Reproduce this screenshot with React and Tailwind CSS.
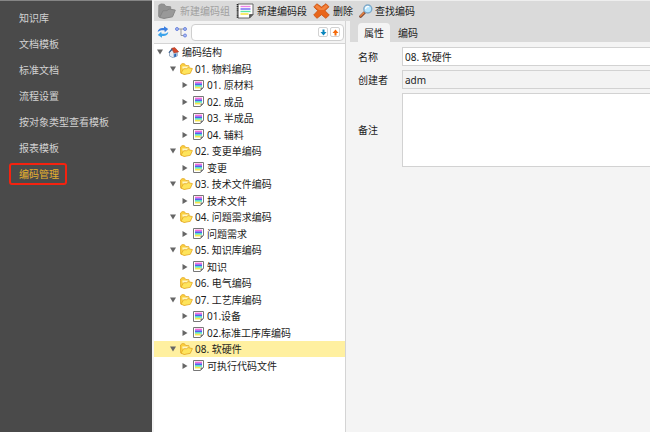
import React, { useState } from 'react';
import clsx from 'clsx';

const MENU = ['知识库', '文档模板', '标准文档', '流程设置', '按对象类型查看模板', '报表模板', '编码管理'];

const TREE = [
  { label: '编码结构', level: 0, icon: 'home', open: true },
  { label: '01. 物料编码', level: 1, icon: 'folder', open: true },
  { label: '01. 原材料', level: 2, icon: 'page' },
  { label: '02. 成品', level: 2, icon: 'page' },
  { label: '03. 半成品', level: 2, icon: 'page' },
  { label: '04. 辅料', level: 2, icon: 'page' },
  { label: '02. 变更单编码', level: 1, icon: 'folder', open: true },
  { label: '变更', level: 2, icon: 'page' },
  { label: '03. 技术文件编码', level: 1, icon: 'folder', open: true },
  { label: '技术文件', level: 2, icon: 'page' },
  { label: '04. 问题需求编码', level: 1, icon: 'folder', open: true },
  { label: '问题需求', level: 2, icon: 'page' },
  { label: '05. 知识库编码', level: 1, icon: 'folder', open: true },
  { label: '知识', level: 2, icon: 'page' },
  { label: '06. 电气编码', level: 1, icon: 'folder', leaf: true },
  { label: '07. 工艺库编码', level: 1, icon: 'folder', open: true },
  { label: '01.设备', level: 2, icon: 'page' },
  { label: '02.标准工序库编码', level: 2, icon: 'page' },
  { label: '08. 软硬件', level: 1, icon: 'folder', open: true },
  { label: '可执行代码文件', level: 2, icon: 'page' },
];

const INDENT = ['pl-[3px]', 'pl-4', 'pl-7'];

function PageIcon() {
  return (
    <svg className="w-[18px] h-4" viewBox="0 0 18 16" fill="none" aria-hidden="true">
      <path d="M2 1h15v10.500L13.500 15H2z" fill="#fff" stroke="#666" />
      <path d="M1.500 1v14" stroke="#222" strokeWidth="1.600" strokeDasharray="1.200 .9" />
      <path d="M17 11.500h-3.500V15z" fill="#555" stroke="#555" strokeWidth=".8" />
      <path d="M4.500 3.500h10" stroke="#ee82e6" strokeWidth="1.400" />
      <path d="M4.500 6h10" stroke="#6b63f2" strokeWidth="1.400" />
      <path d="M4.500 8.500h10" stroke="#5ce6a5" strokeWidth="1.400" />
      <path d="M4.500 11h8" stroke="#f5e02f" strokeWidth="1.400" />
    </svg>
  );
}

function CodeIcon() {
  return (
    <svg className="w-[11px] h-[11px]" viewBox="0 0 11 11" fill="none" aria-hidden="true">
      <path d="M.5.5h10v7l-3 3h-7z" fill="#fff" stroke="#777" />
      <path d="M10.500 7.500h-3v3z" fill="#777" />
      <path d="M2 2.500h7" stroke="#f56ad8" strokeWidth="1.700" />
      <path d="M2 4.200h7" stroke="#5a5af0" strokeWidth="1.700" />
      <path d="M2 5.900h7" stroke="#4fe0c8" strokeWidth="1.700" />
      <path d="M2 7.600h5.500" stroke="#f6e64a" strokeWidth="1.700" />
    </svg>
  );
}

function FolderIcon() {
  return (
    <svg className="w-[13px] h-3" viewBox="0 0 13 12" fill="none" aria-hidden="true">
      <path d="M.6 9.800L.5 2 2.200.6l2.300.2 1.100 1.600 3.400.4V6L5 11.200z" fill="#fbd03f" stroke="#e3a722" strokeWidth=".8" strokeLinejoin="round" />
      <path d="M2.200 3.400l6.400.2v2.600l-5 3z" fill="#fff6c4" />
      <path d="M1 10.200l2.600-4.400 3-.1 1.500-1.100 4.300 1-2.100 4.700-6 1.200z" fill="#fee45c" stroke="#e3a722" strokeWidth=".8" strokeLinejoin="round" />
    </svg>
  );
}

function HomeIcon() {
  return (
    <svg className="w-[11px] h-[11px]" viewBox="0 0 11 11" fill="none" aria-hidden="true">
      <path d="M1.500 5.500l3-3.500 5 2.500v4.300L5 10.700 1.500 9z" fill="#e8eef6" stroke="#7890ad" strokeWidth=".7" />
      <path d="M5 6l4.500-1.500v4.300L5 10.700z" fill="#b9cce4" />
      <path d="M6.200 7.200l2-.8v3l-2 .8z" fill="#2867b5" />
      <path d="M3.600 1.300L6.800.6l3.900 4.200L6 6z" fill="#d5482b" stroke="#a5351d" strokeWidth=".5" />
      <path d="M3.800 1.200L.4 5.400l1 .7L4.200 3l1.600 3z" fill="#3b5f8d" />
    </svg>
  );
}

function DisabledFolderIcon() {
  return (
    <svg className="w-[18px] h-4" viewBox="0 0 18 16" fill="none" aria-hidden="true">
      <path d="M.7 13.500L.9 2.200 3 1l3.300.3 1.400 2 5 .5v3L7 15z" fill="#929292" stroke="#8a8a8a" strokeLinejoin="round" />
      <path d="M1.600 14.500L5 7.800l4-.2 2-1.600 6.300 1.100-2.800 6.700-8.400 1.600z" fill="#999" stroke="#868686" strokeLinejoin="round" />
    </svg>
  );
}

function DeleteIcon() {
  return (
    <svg className="w-[17px] h-4" viewBox="0 0 17 16" fill="none" aria-hidden="true">
      <path
        d="M3.800.8l4.700 3.200L13 .7l3 3.100-4 3.900 4.300 4.400-3.500 3.200-4.300-3.600L4 15.300.7 12l4-4.300L.8 3.900z"
        fill="#e8651a"
        stroke="#c9520f"
        strokeWidth=".8"
        strokeLinejoin="round"
      />
      <path d="M3.800 1.800l4.700 3.500L13 1.800l1.900 2-4 3.100H6.100L2.200 3.900z" fill="#f28440" />
    </svg>
  );
}

function SearchIcon() {
  return (
    <svg className="w-[14px] h-[14px]" viewBox="0 0 14 14" fill="none" aria-hidden="true">
      <path d="M1.600 12.400l4-4" stroke="#7d4a35" strokeWidth="2.800" strokeLinecap="round" />
      <path d="M1.600 12l3.200-3.200" stroke="#eb8340" strokeWidth="1.400" strokeLinecap="round" />
      <circle cx="8.800" cy="5" r="4" fill="#b5e6ff" stroke="#7fa9c9" strokeWidth="1.400" />
      <path d="M6.600 4.600A2.500 2.500 0 0 1 9.400 2.600" stroke="#fff" strokeWidth="1.400" strokeLinecap="round" />
    </svg>
  );
}

function RefreshIcon() {
  return (
    <svg className="w-3 h-3" viewBox="0 0 12 12" fill="none" aria-hidden="true">
      <path d="M.8 6C.8 3.200 3.500 1.700 7 2L7 .2 11.200 3 7.800 6.200 7.400 4.300C4.700 4 2.300 4.300.8 6z" fill="#3b7fe0" />
      <path d="M11.200 6c0 2.800-2.700 4.300-6.200 4l0 1.800L.8 9l3.400-3.200.4 1.900C7.300 8 9.700 7.700 11.200 6z" fill="#3ba3ea" />
    </svg>
  );
}

function NodesIcon() {
  return (
    <svg className="w-3 h-3" viewBox="0 0 12 12" fill="none" aria-hidden="true">
      <path d="M3 3h6M6 3v6.500h3" stroke="#999" />
      <circle cx="2" cy="3" r="1.500" fill="#a9bbf5" stroke="#6f86dd" />
      <circle cx="10" cy="3" r="1.500" fill="#a9bbf5" stroke="#6f86dd" />
      <circle cx="10" cy="9.500" r="1.500" fill="#a9bbf5" stroke="#6f86dd" />
    </svg>
  );
}

function ArrowIcon({ className }) {
  return (
    <svg className={clsx('size-[7px]', className)} viewBox="0 0 7 7" aria-hidden="true">
      <path d="M2.500 .5h2V3h2l-3 3.500-3-3.500h2z" fill="currentColor" />
    </svg>
  );
}

function Caret({ open }) {
  return (
    <svg className="w-[6px] h-[6px]" viewBox="0 0 6 6" aria-hidden="true">
      <path d={open ? 'M0 .5h6L3 5.500z' : 'M.5 0v6l5-3z'} fill="#666" />
    </svg>
  );
}

const NODE_ICONS = { home: HomeIcon, folder: FolderIcon, page: CodeIcon };

function ToolButton({ icon, children, className, disabled }) {
  return (
    <button
      type="button"
      disabled={disabled}
      className={clsx('flex items-center whitespace-nowrap disabled:text-[#a0a0a0]', className)}
    >
      {icon}
      {children}
    </button>
  );
}

export default function App() {
  const [menu, setMenu] = useState('编码管理');
  const [tab, setTab] = useState('属性');
  const [selected, setSelected] = useState(18);

  return (
    <div className="min-h-screen flex bg-[#f4f4f4] text-[#1c1c1c] text-[10px] leading-4 font-['Noto_Sans','Noto_Sans_CJK_SC',sans-serif]">
      <nav className="w-[152px] shrink-0 bg-[#4a4a4a] border-t border-[#858585] pt-1 pl-[9px]">
        <ul>
          {MENU.map((item) => (
            <li key={item} className="h-[26px] flex items-center">
              <button
                type="button"
                onClick={() => setMenu(item)}
                className={clsx(
                  'h-[22px] pl-2 pr-[6px] rounded-[3px] border-2 leading-none',
                  menu === item ? 'border-[#f5220f] text-[#e6b02e]' : 'border-transparent text-[#d2d2d2]'
                )}
              >
                {item}
              </button>
            </li>
          ))}
        </ul>
      </nav>

      <div className="flex-1 min-w-0 flex flex-col pl-0.5">
        <header className="h-[21px] flex items-center gap-[6px] bg-[#dadada] border-t border-[#eee] pl-1 overflow-hidden">
          <ToolButton disabled icon={<DisabledFolderIcon />} className="gap-1">新建编码组</ToolButton>
          <ToolButton icon={<PageIcon />} className="gap-[3px]">新建编码段</ToolButton>
          <ToolButton icon={<DeleteIcon />} className="gap-[3px]">删除</ToolButton>
          <ToolButton icon={<SearchIcon />} className="gap-0.5">查找编码</ToolButton>
        </header>

        <div className="flex-1 flex">
          <section className="w-[192px] shrink-0 flex flex-col border-r border-[#d4d4d4]">
            <div className="h-[22px] flex items-center pl-[3px] pr-px">
              <button type="button" aria-label="刷新"><RefreshIcon /></button>
              <button type="button" aria-label="结构" className="ml-[6px]"><NodesIcon /></button>
              <div className="flex-1 min-w-0 h-[17px] ml-1 flex items-center gap-0.5 pr-[3px] bg-white border border-[#cfcfcf] rounded-[4px]">
                <input type="text" aria-label="搜索" className="flex-1 min-w-0 h-full px-1 bg-transparent outline-none" />
                <button type="button" aria-label="向下查找" className="size-[10px] grid place-items-center rounded-[2px] border border-[#d2d2d2] text-[#0a86bd]">
                  <ArrowIcon />
                </button>
                <button type="button" aria-label="向上查找" className="size-[10px] grid place-items-center rounded-[2px] border border-[#d2d2d2] text-[#f56a0a]">
                  <ArrowIcon className="rotate-180" />
                </button>
              </div>
            </div>

            <ul role="tree" className="flex-1 bg-white border-t border-[#d4d4d4]">
              {TREE.map((node, i) => {
                const Icon = NODE_ICONS[node.icon];
                return (
                  <li
                    key={i}
                    role="treeitem"
                    aria-level={node.level + 1}
                    aria-selected={selected === i}
                    className={clsx('odd:h-4 even:h-[17px]', selected === i && 'bg-[#fff0a0]')}
                  >
                    <button
                      type="button"
                      onClick={() => setSelected(i)}
                      className={clsx('w-full h-full flex items-center whitespace-nowrap', INDENT[node.level])}
                    >
                      <span className="w-2">{!node.leaf && <Caret open={node.open} />}</span>
                      <span className="w-4 flex justify-center"><Icon /></span>
                      <span className="ml-px">{node.label}</span>
                    </button>
                  </li>
                );
              })}
            </ul>
          </section>

          <main className="flex-1 min-w-0 pl-1">
            <div role="tablist" className="h-[21px] flex items-end bg-[#dadada] pl-2">
              {['属性', '编码'].map((name) => (
                <button
                  key={name}
                  type="button"
                  role="tab"
                  aria-selected={tab === name}
                  onClick={() => setTab(name)}
                  className={clsx('h-[19px] px-[6px] mr-[2px] rounded-t-[4px]', tab === name && 'bg-[#f4f4f4]')}
                >
                  {name}
                </button>
              ))}
            </div>
            <form className="grid grid-cols-[44px_1fr] items-center gap-y-1 pt-[5px] pl-2">
              <label htmlFor="name">名称</label>
              <input id="name" type="text" defaultValue="08. 软硬件" className="min-w-0 h-[19px] px-0.5 bg-white border border-r-0 border-[#d2d2d2]" />
              <label htmlFor="creator">创建者</label>
              <input id="creator" type="text" readOnly value="adm" className="min-w-0 h-[19px] px-0.5 bg-[#f3f3f3] border border-r-0 border-[#d2d2d2]" />
              <label htmlFor="remark">备注</label>
              <textarea id="remark" className="min-w-0 h-[74px] px-0.5 resize-none bg-white border border-r-0 border-[#d2d2d2]" />
            </form>
          </main>
        </div>
      </div>
    </div>
  );
}
